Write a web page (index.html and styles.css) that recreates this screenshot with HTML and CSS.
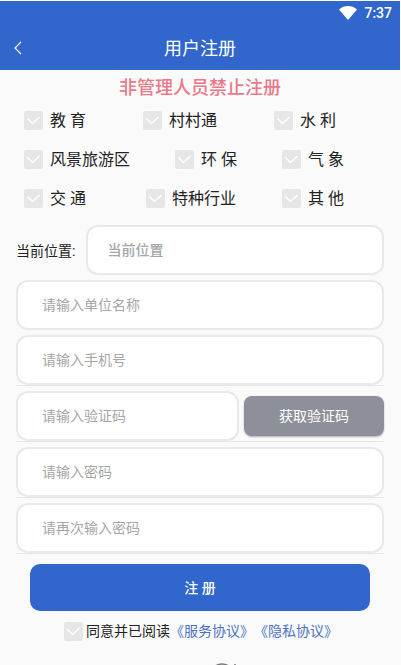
FILE: index.html
```html
<!DOCTYPE html>
<html lang="zh-CN">
<head>
    <meta charset="UTF-8">
    <meta name="viewport" content="width=device-width, initial-scale=1.0">
    <title>用户注册</title>
    <link rel="stylesheet" href="styles.css">
</head>
<body>
    <header>
        <div class="status-bar">
            <svg class="wifi" viewBox="0 0 18 14" aria-hidden="true"><path d="M0 3.4C5.200-1.100 12.800-1.100 18 3.400L9 14Z" fill="#fff"/></svg>
            <span>7:37</span>
        </div>
        <div class="title-bar">
            <button type="button" class="back" aria-label="返回">
                <svg viewBox="0 0 8 14" aria-hidden="true"><path d="M7 1L1 7L7 13" fill="none" stroke="#fff" stroke-width="1.2"/></svg>
            </button>
            <h1>用户注册</h1>
        </div>
    </header>
    <main>
        <p class="notice">非管理人员禁止注册</p>
        <form id="register-form">
            <div class="types">
                <div class="type-row row-wide">
                    <label><input type="checkbox" name="type">教 育</label>
                    <label><input type="checkbox" name="type">村村通</label>
                    <label><input type="checkbox" name="type">水 利</label>
                </div>
                <div class="type-row">
                    <label><input type="checkbox" name="type">风景旅游区</label>
                    <label><input type="checkbox" name="type">环 保</label>
                    <label><input type="checkbox" name="type">气 象</label>
                </div>
                <div class="type-row row-last">
                    <label><input type="checkbox" name="type">交 通</label>
                    <label><input type="checkbox" name="type">特种行业</label>
                    <label><input type="checkbox" name="type">其 他</label>
                </div>
            </div>

            <div class="field location">
                <label for="location">当前位置:</label>
                <input type="text" id="location" placeholder="当前位置">
            </div>
            <div class="field">
                <input type="text" id="company" placeholder="请输入单位名称" aria-label="单位名称">
            </div>
            <div class="field lined">
                <input type="tel" id="phone" placeholder="请输入手机号" aria-label="手机号">
            </div>
            <div class="field lined">
                <input type="text" id="code" placeholder="请输入验证码" aria-label="验证码">
                <button type="button" class="code-button">获取验证码</button>
            </div>
            <div class="field lined">
                <input type="password" id="password" placeholder="请输入密码" aria-label="密码">
            </div>
            <div class="field lined">
                <input type="password" id="password2" placeholder="请再次输入密码" aria-label="再次输入密码">
            </div>

            <button type="submit" class="submit-button">注 册</button>

            <div class="agreement">
                <input type="checkbox" id="agree">
                <label for="agree">同意并已阅读</label>
                <a href="#">《服务协议》</a>
                <a href="#">《隐私协议》</a>
            </div>
        </form>
    </main>
    <footer>
        <svg viewBox="0 0 30 30" aria-hidden="true"><g fill="none" stroke="#777" stroke-width="1.500"><circle cx="12" cy="13" r="12"/><path d="M25 1V12"/></g></svg>
    </footer>
</body>
</html>
```
FILE: styles.css
```css
* {
    box-sizing: border-box;
}

html {
    height: 100%;
    background-color: #fafafa;
}

body {
    height: 100%;
    margin: 0;
    padding: 1px 1px 0 0;
    overflow: hidden;
    font-family: Roboto, "Noto Sans CJK SC", sans-serif;
    font-size: 14px;
    color: #222;
}

header {
    background-color: #3166cc;
    color: white;
}

.status-bar {
    display: flex;
    justify-content: flex-end;
    align-items: center;
    gap: 7px;
    height: 24px;
    padding-right: 8px;
    font-weight: 500;
}

.wifi {
    width: 18px;
    height: 14px;
}

.title-bar {
    display: grid;
    grid-template-columns: 40px 1fr 40px;
    align-items: center;
    height: 45px;
}

.title-bar h1 {
    margin: 0;
    padding-top: 2px;
    font-size: 18px;
    font-weight: 400;
    line-height: 26px;
    text-align: center;
}

button {
    border: none;
    padding: 0;
    font: inherit;
    color: white;
    cursor: pointer;
}

.back {
    display: flex;
    padding: 10px 14px;
    background: none;
}

.back svg {
    width: 8px;
    height: 14px;
}

main {
    padding: 6px 16px 0;
}

.notice {
    margin: 0;
    font-size: 18px;
    font-weight: 500;
    line-height: 24px;
    text-align: center;
    color: #e8798a;
}

.types {
    display: flex;
    flex-direction: column;
    gap: 14px;
    padding: 8px 8px 14px;
}

.type-row {
    display: flex;
    gap: 45px;
}

.row-wide {
    gap: 57px;
}

.row-last {
    gap: 46px;
}

.row-last label:first-child {
    margin-right: 14px;
}

.type-row label {
    display: flex;
    align-items: center;
    gap: 7px;
    font-size: 16px;
    line-height: 25px;
    white-space: pre;
}

input[type="checkbox"] {
    appearance: none;
    flex: none;
    width: 19px;
    height: 19px;
    margin: 0;
    border-radius: 2px;
    background: #e6e6e6 url("data:image/svg+xml,%3Csvg xmlns='http://www.w3.org/2000/svg' viewBox='0 0 19 19'%3E%3Cpath d='M3.500 7.500l5 5 7-6.500' fill='none' stroke='white' stroke-width='1.500'/%3E%3C/svg%3E");
}

input[type="checkbox"]:checked {
    background-color: #3166cc;
}

.field {
    display: flex;
    align-items: center;
    gap: 5px;
    margin-bottom: 5px;
}

.lined {
    border-bottom: 1px solid #e6e6e6;
}

.field input {
    flex: 1;
    min-width: 0;
    height: 50px;
    padding: 0 24px;
    border: 2px solid #e9e9e9;
    border-radius: 12px;
    background-color: white;
    font: inherit;
}

.field input::placeholder {
    color: #a6a6a6;
}

.location {
    gap: 11px;
}

.location input {
    padding: 0 19px;
    font-weight: 500;
}

.code-button {
    width: 140px;
    height: 40px;
    padding-bottom: 2px;
    border-radius: 8px;
    background-color: #8e9099;
    box-shadow: 0 1px 2px rgba(0, 0, 0, 0.3);
}

.submit-button {
    display: block;
    width: calc(100% - 28px);
    height: 47px;
    margin: 10px 14px;
    padding-bottom: 2px;
    border-radius: 10px;
    background-color: #3166cc;
    font-weight: 500;
}

.agreement {
    display: flex;
    justify-content: center;
    align-items: center;
    padding-left: 2px;
    line-height: 20px;
}

.agreement label {
    margin-left: 3px;
}

.agreement a {
    color: #4a72c0;
    text-decoration: none;
}

footer {
    display: flex;
    justify-content: center;
    padding: 22px 0 0 50px;
}

footer svg {
    width: 30px;
    height: 30px;
}
```
